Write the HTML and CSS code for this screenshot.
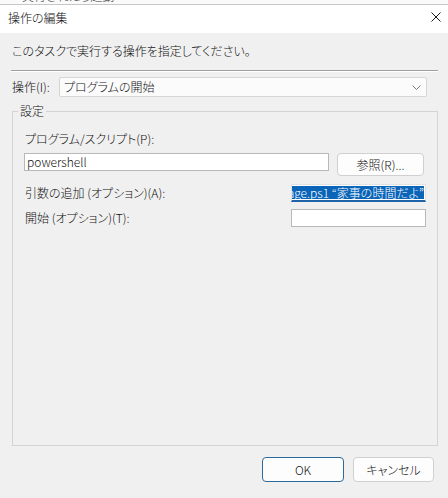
FILE: index.html
```html
<!doctype html>
<html>
<head>
  <meta charset="utf-8">
  <title>操作の編集</title>
  <link rel="stylesheet" href="styles.css">
</head>
<body>
  <div class="behind">
    <div class="behind-cell"><span class="behind-text">実行されたら起動</span></div>
  </div>
  <div class="titlebar">
    <span class="title">操作の編集</span>
    <svg class="close" width="10" height="10" viewBox="0 0 10 10">
      <path d="M0.5 0.5 L9.5 9.5 M9.5 0.5 L0.5 9.5" stroke="#1a1a1a" stroke-width="1" fill="none"/>
    </svg>
  </div>
  <div class="content">
    <div class="intro">このタスクで実行する操作を指定してください。</div>
    <div class="separator"></div>
    <div class="action-row">
      <span class="label">操作(I):</span>
      <div class="combo">
        <span>プログラムの開始</span>
        <svg width="9" height="5" viewBox="0 0 9 5">
          <path d="M0.5 0.5 L4.5 4.5 L8.5 0.5" stroke="#7a7a7a" stroke-width="1" fill="none"/>
        </svg>
      </div>
    </div>
    <fieldset class="group">
      <legend>設定</legend>
      <div class="label prog-label">プログラム/スクリプト(P):</div>
      <div class="prog-row">
        <div class="textbox prog-input">powershell</div>
        <button class="btn browse">参照(R)...</button>
      </div>
      <div class="opt-row args-row">
        <span class="label">引数の追加 (オプション)(A):</span>
        <div class="textbox focused"><span class="selected">message.ps1 “家事の時間だよ”</span></div>
      </div>
      <div class="opt-row start-row">
        <span class="label">開始 (オプション)(T):</span>
        <div class="textbox"></div>
      </div>
    </fieldset>
    <div class="buttons">
      <button class="btn ok">OK</button>
      <button class="btn">キャンセル</button>
    </div>
  </div>
</body>
</html>
```

FILE: styles.css
```css
body {
  margin: 0;
  width: 448px;
  height: 498px;
  overflow: hidden;
  background: #f0f0f0;
  color: #111;
  font-family: "Noto Sans CJK JP", "Noto Sans", sans-serif;
  font-size: 12px;
  font-weight: 300;
  line-height: 16px;
  font-feature-settings: "palt";
}

.behind {
  height: 4px;
  overflow: hidden;
  background: #fafafa;
  border-bottom: 1px solid #c8c8c8;
}

.behind-cell {
  width: 224px;
  height: 4px;
  border-right: 1px solid #a0a0a0;
}

.behind-text {
  display: block;
  margin-top: -12px;
  padding-left: 22px;
  color: #333;
}

.titlebar {
  display: flex;
  justify-content: space-between;
  align-items: flex-start;
  height: 23px;
  padding: 5px 7px 0 8px;
  background: #fff;
}

.close {
  margin-top: 2px;
}

.content {
  padding: 10px 10px 0 12px;
}

.separator {
  margin-top: 11px;
  margin-left: -1px;
  border-top: 1px solid #a0a0a0;
  border-bottom: 1px solid #fff;
}

.action-row {
  display: flex;
  align-items: center;
  margin-top: 5px;
  margin-right: 11px;
}

.action-row .label {
  width: 47px;
}

.combo {
  flex-grow: 1;
  display: flex;
  justify-content: space-between;
  align-items: center;
  height: 18px;
  padding: 0 5px 0 4px;
  background: #fbfbfb;
  border: 1px solid #d6d6d6;
  border-radius: 2px;
}

.group {
  height: 341px;
  margin: 6px 0 0 0;
  padding: 0 13px 0 11px;
  border: 1px solid #d4d4d4;
}

.group legend {
  margin-left: -6px;
  padding: 0 2px;
}

.prog-label {
  margin-top: 12px;
  padding-left: 1px;
}

.prog-row {
  display: flex;
  justify-content: space-between;
  align-items: flex-start;
  margin-top: 6px;
}

.textbox {
  box-sizing: border-box;
  height: 18px;
  padding: 0 2px;
  background: #fff;
  border: 1px solid #b9b9b9;
  overflow: hidden;
  white-space: nowrap;
}

.prog-input {
  width: 305px;
}

.opt-row {
  display: flex;
  justify-content: space-between;
  align-items: center;
  padding-left: 1px;
}

.opt-row .textbox {
  width: 135px;
  margin-right: -2px;
}

.args-row {
  margin-top: 8px;
}

.start-row {
  margin-top: 7px;
}

.textbox.focused {
  display: flex;
  justify-content: flex-end;
  padding: 1px 1px 0 0;
  border-color: #e2e2e2;
  border-bottom: 2px solid #1f64a8;
}

.selected {
  background: #0a64b8;
  color: #fff;
  line-height: 13px;
  height: 13px;
}

.btn {
  box-sizing: border-box;
  height: 23px;
  padding: 0;
  background: #fdfdfd;
  color: #111;
  font: inherit;
  border: 1px solid #d0d0d0;
  border-radius: 4px;
}

.browse {
  width: 87px;
}

.buttons {
  display: flex;
  justify-content: flex-end;
  gap: 9px;
  margin-top: 11px;
  margin-right: 4px;
}

.buttons .btn {
  width: 81px;
  height: 25px;
}

.btn.ok {
  width: 82px;
  border-color: #2c6a9c;
}
```
